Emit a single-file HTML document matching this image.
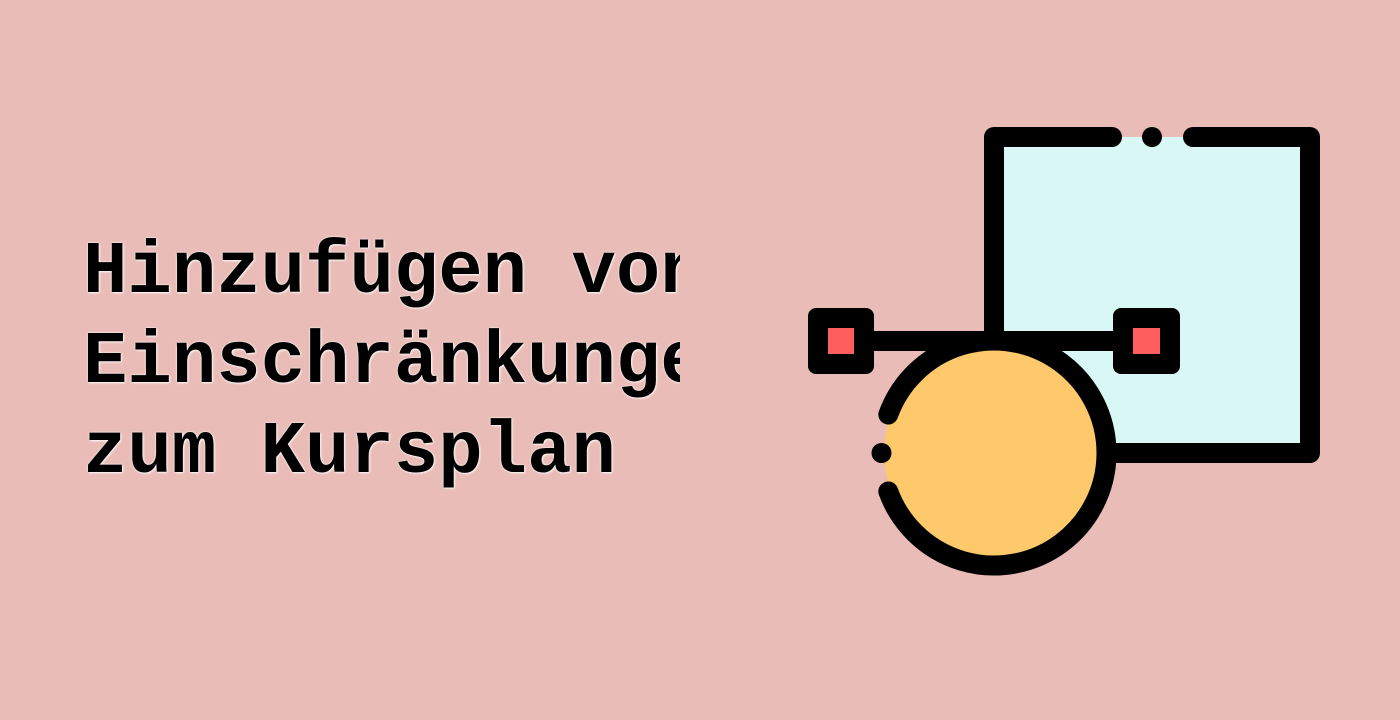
<!DOCTYPE html>
<html><head><meta charset="utf-8"><style>
html,body{margin:0;padding:0;}
body{width:1400px;height:720px;background:#e9bcb7;position:relative;overflow:hidden;}
.t{position:absolute;left:83px;top:228px;width:597px;overflow:hidden;white-space:nowrap;
font:bold 74px/90px "Liberation Mono",monospace;color:#000;
text-shadow:0 0 2px #fff,1px 1px 2px rgba(255,255,255,.8);}
svg{position:absolute;left:0;top:0;}
</style></head><body>
<div class="t">Hinzufügen von<br>Einschränkungen<br>zum Kursplan</div>
<svg width="1400" height="720">
<rect x="994" y="137" width="316" height="316" fill="#d9f8f5"/>
<path d="M1112 137 H994 V453 H1310 V137 H1193" fill="none" stroke="#000" stroke-width="20" stroke-linejoin="round" stroke-linecap="round"/>
<circle cx="1152" cy="137" r="10" fill="#000"/>
<line x1="840" y1="341" x2="1146" y2="341" stroke="#000" stroke-width="20"/>
<circle cx="994" cy="453" r="110" fill="#fdc96b"/>
<path d="M888.3 414.5 A112.5 112.5 0 1 1 888.3 491.5" fill="none" stroke="#000" stroke-width="20" stroke-linecap="round"/>
<circle cx="881.5" cy="453" r="10" fill="#000"/>
<rect x="808" y="308" width="66" height="66" rx="8" fill="#000"/>
<rect x="828" y="328" width="26" height="26" fill="#ff5e5e"/>
<rect x="1113" y="308" width="67" height="66" rx="8" fill="#000"/>
<rect x="1133" y="328" width="27" height="26" fill="#ff5e5e"/>
</svg>
</body></html>
